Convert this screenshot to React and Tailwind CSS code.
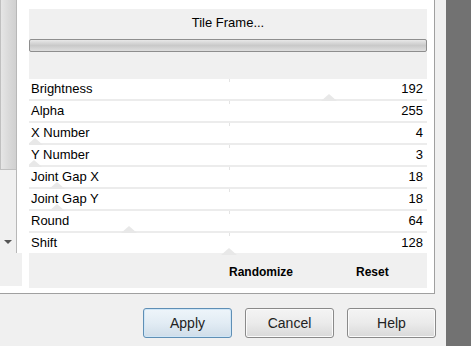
import React from "react";

const rows = [
  { label: "Brightness", value: 192 },
  { label: "Alpha", value: 255 },
  { label: "X Number", value: 4 },
  { label: "Y Number", value: 3 },
  { label: "Joint Gap X", value: 18 },
  { label: "Joint Gap Y", value: 18 },
  { label: "Round", value: 64 },
  { label: "Shift", value: 128 },
];

function Row({ label, value, last }) {
  const pos = (value / 255) * 398;
  return (
    <div className="relative flex h-[22px] flex-col">
      <div className="relative flex h-[20px] items-center justify-between bg-white pl-[2px] pr-[4px]">
        <span>{label}</span>
        <span>{value}</span>
        <div className="absolute left-[200px] top-0 h-[3px] w-px bg-[#e4e4e4]" />
      </div>
      <div className={"h-[2px] " + (last ? "bg-[#f0f0f0]" : "bg-[#ececec]")} />
      {value < 255 && (
        <div
          className="pointer-events-none absolute bottom-0 h-0 w-0 border-x-[8px] border-b-[7px] border-x-transparent border-b-[#e8e8e8]"
          style={{ left: pos - 8 }}
        />
      )}
    </div>
  );
}

function Button({ children, primary }) {
  return (
    <div
      className={
        "flex h-[30px] w-[89px] items-center justify-center rounded-[3px] border text-[14px] text-[#222] " +
        (primary
          ? "border-[#5f8fb5] bg-gradient-to-b from-[#eef5fa] via-[#e2ecf4] to-[#cfdde9] shadow-[inset_0_0_0_1px_#cfe6f7]"
          : "border-[#8a8a8a] bg-gradient-to-b from-[#f4f4f4] via-[#ebebeb] to-[#d9d9d9] shadow-[inset_0_0_0_1px_#fbfbfb]")
      }
    >
      {children}
    </div>
  );
}

export default function App() {
  return (
    <div
      className="flex h-[346px] w-[471px] overflow-hidden bg-[#f0f0f0] text-[13px] text-black"
      style={{ fontFamily: '"Liberation Sans", Arial, sans-serif' }}
    >
      <div className="flex w-[446px] flex-col">
        <div className="flex h-[294px] w-[435px] border-b border-r border-[#a0a0a0] bg-white">
          <div className="flex w-[22px] flex-col">
            <div className="flex h-[253px] w-[17px] flex-col border-r border-[#b8b8b8] bg-[#f0f0f0]">
              <div className="h-[170px] border-b border-l border-[#c0c0c0] bg-gradient-to-r from-[#e6e6e6] via-[#dadada] to-[#d0d0d0]" />
              <div className="flex-1" />
              <div className="flex h-[18px] items-start justify-center pt-[5px]">
                <div className="h-0 w-0 border-x-[4px] border-t-[4px] border-x-transparent border-t-[#555]" />
              </div>
            </div>
            <div className="h-[33px] bg-[#f0f0f0]" />
          </div>
          <div className="ml-[7px] flex w-[398px] flex-col overflow-hidden pt-[9px]">
            <div className="flex h-[70px] flex-col bg-[#f0f0f0]">
              <div className="flex h-[28px] items-center justify-center">Tile Frame...</div>
              <div className="mt-[2px] h-[13px] rounded-[2px] border border-[#8e8e8e] bg-gradient-to-b from-[#e8e8e8] via-[#c9c9c9] to-[#dedede]" />
            </div>
            {rows.map((r, i) => (
              <Row key={r.label} {...r} last={i === rows.length - 1} />
            ))}
            <div className="flex h-[33px] items-center bg-[#f0f0f0] text-[12px] font-bold">
              <span className="ml-[200px]">Randomize</span>
              <span className="ml-[63px]">Reset</span>
            </div>
          </div>
        </div>
        <div className="flex gap-[13px] pl-[143px] pt-[14px]">
          <Button primary>Apply</Button>
          <Button>Cancel</Button>
          <Button>Help</Button>
        </div>
      </div>
      <div className="flex-1 bg-[#727272]" />
    </div>
  );
}
